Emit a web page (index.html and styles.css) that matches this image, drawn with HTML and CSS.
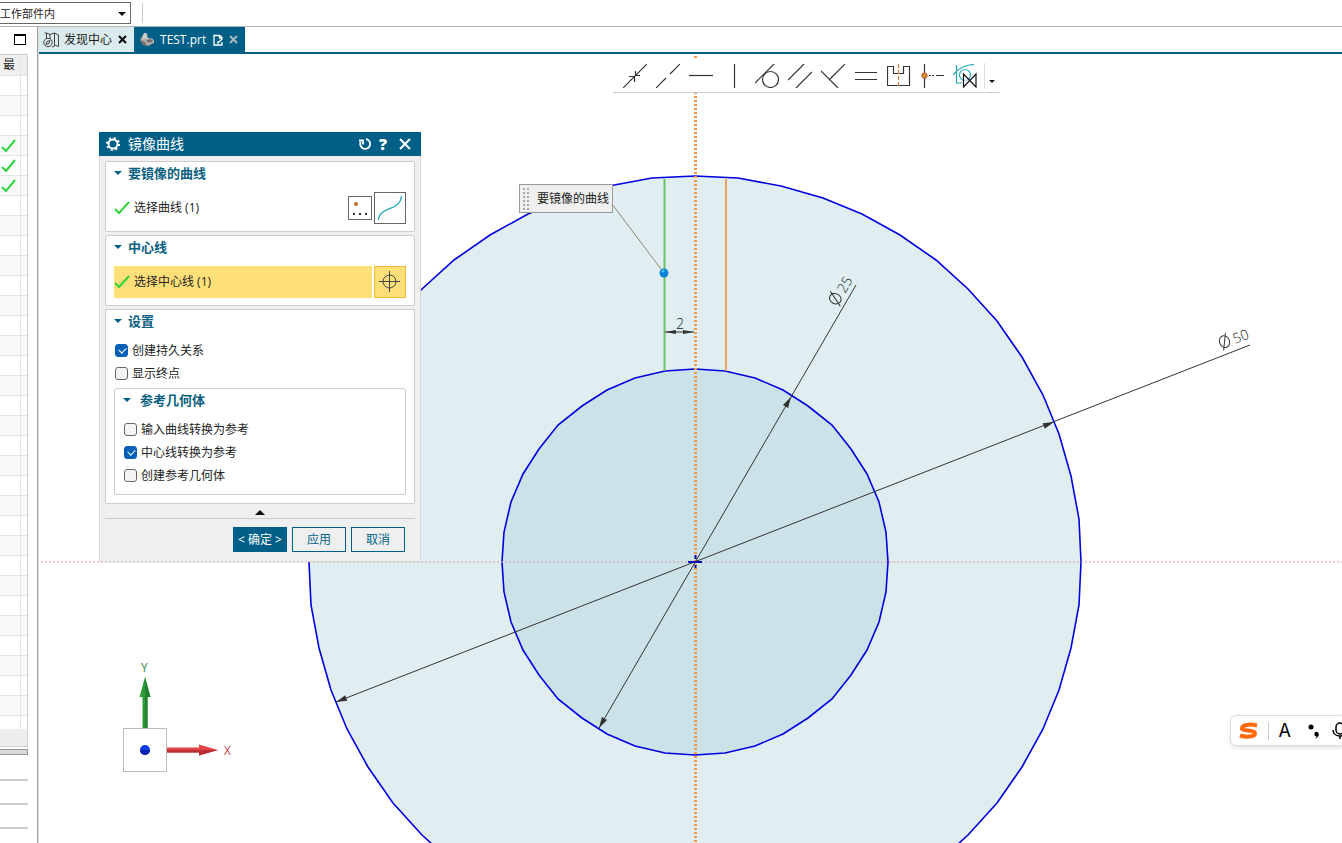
FILE: index.html
```
<!DOCTYPE html>
<html lang="zh-CN">
<head>
    <meta charset="UTF-8">
    <meta name="viewport" content="width=device-width, initial-scale=1.0">
    <title>TEST.prt</title>
    <link rel="stylesheet" href="styles.css">
</head>
<body>
    <header class="topbar">
        <div class="scope">
            <select aria-label="选择范围">
                <option>工作部件内</option>
            </select>
        </div>
        <span class="topbar-divider"></span>
    </header>

    <div class="workspace">
        <aside class="sidebar">
            <div class="sidebar-head">
                <button class="maximize" aria-label="最大化"></button>
            </div>
            <table class="history">
                <thead>
                    <tr><th>最</th><th></th></tr>
                </thead>
                <tbody>
                    <tr><td></td><td></td></tr>
                    <tr><td></td><td></td></tr>
                    <tr><td></td><td></td></tr>
                    <tr><td><svg class="tick" viewBox="0 0 16 14"><path d="M2 8l4 4L15 1"/></svg></td><td></td></tr>
                    <tr><td><svg class="tick" viewBox="0 0 16 14"><path d="M2 8l4 4L15 1"/></svg></td><td></td></tr>
                    <tr><td><svg class="tick" viewBox="0 0 16 14"><path d="M2 8l4 4L15 1"/></svg></td><td></td></tr>
                    <tr><td></td><td></td></tr>
                    <tr><td></td><td></td></tr>
                    <tr><td></td><td></td></tr>
                    <tr><td></td><td></td></tr>
                    <tr><td></td><td></td></tr>
                    <tr><td></td><td></td></tr>
                    <tr><td></td><td></td></tr>
                    <tr><td></td><td></td></tr>
                    <tr><td></td><td></td></tr>
                    <tr><td></td><td></td></tr>
                    <tr><td></td><td></td></tr>
                    <tr><td></td><td></td></tr>
                    <tr><td></td><td></td></tr>
                    <tr><td></td><td></td></tr>
                    <tr><td></td><td></td></tr>
                    <tr><td></td><td></td></tr>
                    <tr><td></td><td></td></tr>
                    <tr><td></td><td></td></tr>
                    <tr><td></td><td></td></tr>
                    <tr><td></td><td></td></tr>
                    <tr><td></td><td></td></tr>
                    <tr><td></td><td></td></tr>
                    <tr><td></td><td></td></tr>
                    <tr><td></td><td></td></tr>
                    <tr><td></td><td></td></tr>
                    <tr><td></td><td></td></tr>
                    <tr class="cut"><td></td><td></td></tr>
                </tbody>
            </table>
            <div class="scroll-track"></div>
            <div class="splitter"></div>
            <div class="drawer"></div>
            <div class="drawer"></div>
            <div class="drawer"></div>
        </aside>

        <main class="main">
            <nav class="tabs">
                <a class="tab" href="#">
                    <svg width="17" height="16" viewBox="0 0 17 16" fill="none" stroke="#444"><path d="M3.500 7V1L7 2.500V7M7 2.500L11.500 1v13L9 15M11.500 1L15.500 3v11.500L11.500 13M1.500 1h2"/><circle cx="5" cy="10.500" r="4.200"/><path d="M3 12.500l1-3 3-1-1 3z"/></svg>
                    <span>发现中心</span>
                    <svg width="9" height="9" viewBox="0 0 9 9" stroke="#111" stroke-width="2.200"><path d="M1 1l7 7M8 1L1 8"/></svg>
                </a>
                <a class="tab active" href="#">
                    <svg width="16" height="15" viewBox="0 0 16 15"><path d="M1 8L5 1l3 0 1 5 6 2v3l-6 3-5-1z" fill="#a8a4a0"/><path d="M1 8l5 2 2 4-4-1z" fill="#77706c"/><path d="M5 1L3 8l5-2-1-5z" fill="#d0cbc6"/><ellipse cx="10.500" cy="9" rx="4" ry="2.300" fill="#746f6c" stroke="#ddd" stroke-width=".8"/></svg>
                    <span>TEST.prt</span>
                    <svg width="11" height="12" viewBox="0 0 11 12" fill="none" stroke="#fff" stroke-width="1.300"><path d="M9 8v3H1V1.500h6L9.500 4"/><path d="M9.500 4.500L5 9V7M6.500 1.500V4h3"/></svg>
                    <svg width="9" height="9" viewBox="0 0 9 9" stroke="#a9b8c1" stroke-width="2"><path d="M1 1l7 7M8 1L1 8"/></svg>
                </a>
            </nav>

            <div class="canvas">
                <svg class="drawing">
                    <!-- sketch origin is the centre of both circles -->
                    <g transform="translate(656 508)">
                        <polygon class="curve outer" points="0,-386 43,-384 86,-376 128,-364 167,-348 205,-327 241,-302 273,-273 302,-241 327,-205 348,-167 364,-128 376,-86 384,-43 386,0 384,43 376,86 364,128 348,167 327,205 302,241 273,273 241,302 205,327 167,348 128,364 86,376 43,384 0,386 -43,384 -86,376 -128,364 -167,348 -205,327 -241,302 -273,273 -302,241 -327,205 -348,167 -364,128 -376,86 -384,43 -386,0 -384,-43 -376,-86 -364,-128 -348,-167 -327,-205 -302,-241 -273,-273 -241,-302 -205,-327 -167,-348 -128,-364 -86,-376 -43,-384"/>
                        <polygon class="curve inner" points="0,-193 30,-191 60,-184 88,-172 113,-156 137,-137 156,-113 172,-88 184,-60 191,-30 193,0 191,30 184,60 172,88 156,113 137,137 113,156 88,172 60,184 30,191 0,193 -30,191 -60,184 -88,172 -113,156 -137,137 -156,113 -172,88 -184,60 -191,30 -193,0 -191,-30 -184,-60 -172,-88 -156,-113 -137,-137 -113,-156 -88,-172 -60,-184 -30,-191"/>

                        <path class="axis-x" d="M-654 0H2000"/>
                        <path class="axis-y" d="M.5 -506V600"/>
                        <path class="source" d="M-30.500 -383V-191"/>
                        <path class="mirror" d="M31 -383V-191"/>

                        <g class="dim">
                            <path d="M161 -277L-96 166M555 -217L-359 140M-30 -230H-1"/>
                            <path class="arrow" d="M0 0l-11 -3v6z" transform="translate(96 -165) rotate(-60)"/>
                            <path class="arrow" d="M0 0l-11 -3v6z" transform="translate(-96 166) rotate(120)"/>
                            <path class="arrow" d="M0 0l-11 -3v6z" transform="translate(359 -140) rotate(-21)"/>
                            <path class="arrow" d="M0 0l-11 -3v6z" transform="translate(-359 140) rotate(159)"/>
                            <path class="arrow" d="M-30 -230l11 -2v4zM-1 -230l-11 -2v4z"/>
                            <text x="-19" y="-233">2</text>
                            <g transform="translate(143 -256) rotate(-60)">
                                <path d="M0 -6a5 6 0 0 1 10 0a5 6 0 0 1 -10 0M1 2L9 -14"/>
                                <text x="14">25</text>
                            </g>
                            <g transform="translate(527 -213) rotate(-21)">
                                <path d="M0 -6a5 6 0 0 1 10 0a5 6 0 0 1 -10 0M1 2L9 -14"/>
                                <text x="14">50</text>
                            </g>
                        </g>

                        <path class="leader" d="M-83 -358L-31 -289"/>
                        <circle cx="-31" cy="-289" r="4.500" fill="#0a84d8"/>
                        <circle cx="-32" cy="-291" r="1.500" fill="#4fc0ff"/>
                        <path class="origin" d="M-7 0H7M.5 -7v4M.5 -1v2M.5 3v3"/>
                    </g>

                    <!-- view triad -->
                    <g class="triad" transform="translate(106 696)">
                        <rect x="-21.500" y="-21.500" width="43" height="43" fill="#fff" stroke="#bbb"/>
                        <path d="M-2.500 -22v-31h-3L0 -73l5.500 20h-3v31z" fill="#2f9a38"/>
                        <path d="M0 -22v-51l5.500 20h-3v31z" fill="#23802c"/>
                        <path d="M22 -2.500h32v-3L73 0 54 5.500v-3H22z" fill="#e04444"/>
                        <path d="M22 0h51L54 5.500v-3H22z" fill="#b83034"/>
                        <circle r="5" fill="#0a3bea"/>
                        <path d="M-5 0a5 5 0 0 0 10 0z" fill="#0a22b0"/>
                        <text x="-4" y="-78" fill="#3c8c46">Y</text>
                        <text x="79" y="5" fill="#c8414a">X</text>
                    </g>
                </svg>

                <div class="constraints">
                    <button aria-label="重合"><svg viewBox="0 0 24 24"><path d="M0 24L24 0M6 12.500h5.500V18M12.500 7v4.500H17"/></svg></button>
                    <button aria-label="共线"><svg viewBox="0 0 24 24"><path d="M0 24l10-10M14 10L24 0"/></svg></button>
                    <button aria-label="水平"><svg viewBox="0 0 24 24"><path d="M0 11.500h24"/></svg></button>
                    <button aria-label="竖直"><svg viewBox="0 0 24 24"><path d="M12.500 0v24"/></svg></button>
                    <button aria-label="相切"><svg viewBox="0 0 24 24"><path d="M0 19L19 0"/><circle cx="15.500" cy="15.500" r="8"/></svg></button>
                    <button aria-label="平行"><svg viewBox="0 0 24 24"><path d="M0 16L16 0M8 24L24 8"/></svg></button>
                    <button aria-label="垂直"><svg viewBox="0 0 24 24"><path d="M9 15L24 0M0 7l17 17"/></svg></button>
                    <button aria-label="等长"><svg viewBox="0 0 24 24"><path d="M1 8.500h22M1 15.500h22"/></svg></button>
                    <button aria-label="对称"><svg viewBox="0 0 24 24"><path d="M.5 2.500h6v7h10v-7h6v19H.5z"/><path class="orange" d="M11.500 0v24"/></svg></button>
                    <button aria-label="中点"><svg viewBox="0 0 24 24"><path d="M4.500 0v24M9 11.500h2M12 11.500h2M16 11.500h8"/><circle cx="4.500" cy="11.500" r="2.500" fill="#d98a3d" stroke="#b5651d"/></svg></button>
                    <button aria-label="自动关系"><svg viewBox="0 0 24 24"><path d="M0 11Q8 1 21 .5M3.500 1v18H9" stroke="#22a6b8"/><circle cx="12" cy="11" r="5.500" stroke="#22a6b8"/><path d="M10.500 10v13L23 10v13z" stroke="#111" fill="#fff" fill-opacity=".6"/></svg></button>
                    <button class="more" aria-label="更多"></button>
                </div>

                <div class="callout"><span class="grip"></span>要镜像的曲线</div>

                <form class="dialog">
                    <div class="dialog-title">
                        <svg width="16" height="16" viewBox="0 0 16 16" fill="none" stroke="#fff"><circle cx="8" cy="8" r="4.500" stroke-width="2"/><circle cx="8" cy="8" r="6" stroke-width="2" stroke-dasharray="2 2.710"/></svg>
                        <h2>镜像曲线</h2>
                        <button type="button" aria-label="重置"><svg width="14" height="14" viewBox="0 0 14 14" fill="none" stroke="#fff" stroke-width="1.800"><path d="M8 2a5 5 0 1 1-5.500 3M1 3.500h4v4"/></svg></button>
                        <button type="button" class="help">?</button>
                        <button type="button" aria-label="关闭"><svg width="12" height="12" viewBox="0 0 12 12" stroke="#fff" stroke-width="2"><path d="M1 1l10 10M11 1L1 11"/></svg></button>
                    </div>
                    <div class="dialog-body">
                        <section class="group">
                            <h3>要镜像的曲线</h3>
                            <div class="pick">
                                <div class="pick-label"><svg class="tick" viewBox="0 0 16 14"><path d="M1 8l4 4L15 1"/></svg>选择曲线 (1)</div>
                                <button type="button" class="pick-small" aria-label="点"><svg width="22" height="22" viewBox="0 0 22 22"><circle cx="7" cy="7" r="2" fill="#d2691e"/><path d="M4 16h2v2H4zM10 16h2v2h-2zM16 16h2v2h-2z" fill="#333"/></svg></button>
                                <button type="button" class="pick-big" aria-label="曲线"><svg width="30" height="30" viewBox="0 0 30 30" fill="none" stroke="#22a6b8" stroke-width="1.300"><path d="M3.500 27C4 13 25 19 26.500 3"/></svg></button>
                            </div>
                        </section>
                        <section class="group">
                            <h3>中心线</h3>
                            <div class="pick selected">
                                <div class="pick-label"><svg class="tick" viewBox="0 0 16 14"><path d="M1 8l4 4L15 1"/></svg>选择中心线 (1)</div>
                                <button type="button" class="pick-big" aria-label="中心线"><svg width="30" height="30" viewBox="0 0 30 30" fill="none" stroke="#444"><circle cx="14.500" cy="14.500" r="6.500"/><path d="M4 14.500h21M14.500 4v21"/></svg></button>
                            </div>
                        </section>
                        <section class="group">
                            <h3>设置</h3>
                            <div class="checks">
                                <label><input type="checkbox" checked>创建持久关系</label>
                                <label><input type="checkbox">显示终点</label>
                            </div>
                            <div class="subgroup">
                                <h3>参考几何体</h3>
                                <div class="checks">
                                    <label><input type="checkbox">输入曲线转换为参考</label>
                                    <label><input type="checkbox" checked>中心线转换为参考</label>
                                    <label><input type="checkbox">创建参考几何体</label>
                                </div>
                            </div>
                        </section>
                        <button type="button" class="collapse" aria-label="收起"></button>
                        <div class="actions">
                            <button type="button" class="primary">&lt; 确定 &gt;</button>
                            <button type="button">应用</button>
                            <button type="button">取消</button>
                        </div>
                    </div>
                </form>

                <div class="ime">
                    <svg width="20" height="18" viewBox="0 0 20 18" fill="none" stroke="#ff6a0c" stroke-width="4"><path d="M18 3.500C10 1.500 3 3 3 6.500c0 3 13 1 13 5 0 3.500-9 4-15 2"/></svg>
                    <span class="ime-divider"></span>
                    <span class="ime-mode">A</span>
                    <svg width="12" height="16" viewBox="0 0 12 16"><circle cx="3" cy="4" r="2.500"/><circle cx="8.500" cy="11" r="2.200"/><path d="M10.700 11c0 3-1.700 4-4 4.500 1.500-1 2-2 2-3z"/></svg>
                    <svg width="16" height="18" viewBox="0 0 16 18" fill="none" stroke="#000" stroke-width="1.500"><rect x="4" y="1" width="8" height="11" rx="4"/><path d="M1 8c0 8 14 8 14 0M8 14v3"/></svg>
                </div>
            </div>
        </main>
    </div>
</body>
</html>
```
FILE: styles.css
```
* {
    box-sizing: border-box;
}
body {
    margin: 0;
    height: 100vh;
    display: flex;
    flex-direction: column;
    overflow: hidden;
    background: #fff;
    color: #222;
    font-family: "Open Sans", "Noto Sans CJK SC", sans-serif;
    font-size: 12px;
    line-height: 20px;
}
button {
    font: inherit;
    padding: 0;
    border: none;
    background: none;
    cursor: pointer;
}
h2, h3 {
    margin: 0;
}
svg {
    flex: none;
}

/* top bar */
.topbar {
    display: flex;
    align-items: center;
    flex: none;
    height: 27px;
    border-bottom: 1px solid #b4b4b4;
}
.scope {
    position: relative;
    width: 131px;
}
.scope select {
    display: block;
    appearance: none;
    width: 100%;
    height: 22px;
    padding: 0;
    border: 1px solid #666;
    border-left: none;
    border-radius: 0;
    background: #fff;
    color: #222;
    font-family: inherit;
    font-size: 11px;
}
.scope::after {
    content: "";
    position: absolute;
    right: 5px;
    top: 10px;
    border: 4px solid transparent;
    border-top-color: #111;
    pointer-events: none;
}
.topbar-divider {
    width: 1px;
    height: 20px;
    margin-left: 11px;
    background: #ccc;
}

/* left panel */
.workspace {
    display: flex;
    flex: 1;
    min-height: 0;
}
.sidebar {
    flex: none;
    width: 39px;
    border-right: 1px solid #dcdcdc;
    box-shadow: inset -1px 0 #a0a0a0;
    padding-right: 10px;
    overflow: hidden;
}
.sidebar-head {
    display: flex;
    justify-content: flex-end;
    height: 27px;
    padding: 7px 2px;
}
.maximize {
    width: 12px;
    height: 11px;
    border: 1px solid #000;
    border-top-width: 2px;
}
.history {
    width: 28px;
    table-layout: fixed;
    border-collapse: separate;
    border-spacing: 0;
    border-right: 1px solid #ccc;
}
.history th, .history td {
    height: 20px;
    padding: 0;
    line-height: 0;
    border-bottom: 1px solid #e4e4e4;
    border-right: 1px solid #e4e4e4;
}
.history th {
    height: 22px;
    width: 21px;
    padding-right: 2px;
    font-weight: normal;
    line-height: 20px;
    text-align: center;
    background: #efefef;
    border-top: 1px solid #ccc;
}
.history th + th, .history td + td {
    width: 6px;
    padding: 0;
    border-right: none;
}
.history tr:nth-child(even) td {
    background: #fafafa;
}
.history .cut td {
    height: 13px;
    border-bottom: none;
}
.tick {
    width: 16px;
    height: 14px;
    fill: none;
    stroke: #2fd43c;
    stroke-width: 2;
}
.scroll-track {
    width: 28px;
    height: 18px;
    background: #eee;
    border: 1px solid #d0d0d0;
    border-width: 0 1px 1px 0;
}
.splitter {
    width: 28px;
    height: 6px;
    margin: 2px 0 24px;
    background: #d8d8d8;
    border: 1px solid #999;
    border-left: none;
}
.drawer {
    width: 28px;
    height: 2px;
    margin-bottom: 22px;
    background: #ccc;
}

/* document tabs */
.main {
    display: flex;
    flex-direction: column;
    flex: 1;
    min-width: 0;
}
.tabs {
    display: flex;
    flex: none;
    height: 27px;
    border-bottom: 2px solid #005f87;
}
.tab {
    display: flex;
    align-items: center;
    gap: 4px;
    padding: 0 7px 0 4px;
    background: #dbecef;
    color: #222;
    text-decoration: none;
}
.tab span {
    margin-right: 2px;
}
.tab.active {
    gap: 5px;
    padding: 0 7px 0 5px;
    background: #005f87;
    color: #fff;
}

/* sketch */
.canvas {
    position: relative;
    flex: 1;
    min-height: 0;
    overflow: hidden;
}
.drawing {
    display: block;
    width: 100%;
    height: 100%;
}
.curve {
    stroke: #0000e0;
    stroke-width: 1.6;
}
.outer {
    fill: #e0eef2;
}
.inner {
    fill: #cbe2e8;
}
.axis-x {
    stroke: #d99aa6;
    stroke-dasharray: 2 2;
}
.axis-y {
    stroke: #f09a45;
    stroke-width: 3;
    stroke-dasharray: 2 2;
}
.source {
    stroke: #6dbf66;
    stroke-width: 2;
}
.mirror {
    stroke: #eba25c;
    stroke-width: 2;
}
.dim path {
    stroke: #333;
    fill: none;
}
.dim .arrow {
    fill: #333;
    stroke: none;
}
.dim text {
    font-family: "Open Sans", sans-serif;
    font-size: 14px;
    font-weight: 300;
    fill: #222;
}
.leader {
    stroke: #8f8770;
}
.origin {
    stroke: #0a0ab4;
    stroke-width: 2;
}
.triad text {
    font-size: 12px;
}

/* floating constraint toolbar */
.constraints {
    position: absolute;
    left: 574px;
    top: 4px;
    display: flex;
    align-items: center;
    width: 387px;
    height: 35px;
    padding: 2px 0 0 5px;
    background: #fff;
    border-bottom: 1px solid #ccc;
}
.constraints button {
    display: flex;
    align-items: center;
    justify-content: center;
    width: 33px;
    height: 26px;
}
.constraints svg {
    width: 24px;
    height: 24px;
    fill: none;
    stroke: #333;
    stroke-width: 1.2;
}
.constraints .orange {
    stroke: #d0803a;
    stroke-dasharray: 4 2;
}
.constraints .more {
    width: 14px;
    margin-left: 3px;
    padding-top: 14px;
    border-left: 1px solid #ddd;
}
.more::after {
    content: "";
    border: 3px solid transparent;
    border-top-color: #111;
}

.callout {
    position: absolute;
    left: 480px;
    top: 130px;
    display: flex;
    align-items: center;
    height: 29px;
    padding: 0 3px 0 2px;
    background: #efefef;
    border: 1px solid #999;
}
.grip {
    width: 8px;
    height: 24px;
    margin-right: 7px;
    background: radial-gradient(circle, #aaa 1px, transparent 1px) 0 0 / 4px 4px;
}

/* dialog */
.dialog {
    position: absolute;
    left: 60px;
    top: 78px;
    width: 322px;
    background: #efefef;
}
.dialog-title {
    display: flex;
    align-items: center;
    gap: 7px;
    height: 24px;
    padding: 0 10px 0 6px;
    background: #005f87;
    color: #fff;
}
.dialog-title h2 {
    flex: 1;
    font-size: 14px;
    font-weight: normal;
}
.dialog-title button {
    display: flex;
    color: #fff;
}
.dialog-title .help {
    margin-right: 5px;
    font-size: 16px;
    font-weight: 800;
}
.dialog-body {
    display: flex;
    flex-direction: column;
    gap: 3px;
    padding: 5px 5px 9px;
    border: 1px solid #d8d8d8;
    border-top: none;
}
.group, .subgroup {
    padding: 0 8px 7px;
    background: #fff;
    border: 1px solid #ccc;
    border-radius: 2px;
}
.group:nth-child(3) {
    padding-bottom: 8px;
}
.group h3 {
    display: flex;
    align-items: center;
    gap: 6px;
    height: 24px;
    padding-bottom: 2px;
    font-size: 13px;
    color: #0a6080;
}
.group h3::before {
    content: "";
    border: 4px solid transparent;
    border-top: 4px solid #005f87;
    border-bottom: none;
}
.group .subgroup h3 {
    gap: 9px;
}
.pick {
    display: flex;
    align-items: center;
    gap: 2px;
    margin-top: 6px;
}
.pick-label {
    display: flex;
    align-items: center;
    gap: 4px;
    flex: 1;
    height: 32px;
}
.pick-small, .pick-big {
    display: flex;
    border: 1px solid #666;
    background: #fff;
}
.selected .pick-label, .selected .pick-big {
    background: #ffe078;
}
.selected .pick-big {
    border-color: #f0bc30;
}
.checks {
    margin-top: 5px;
}
.checks label {
    display: flex;
    align-items: center;
    gap: 4px;
    height: 23px;
    padding-left: 1px;
}
.checks input {
    appearance: none;
    position: relative;
    width: 13px;
    height: 13px;
    margin: 0;
    border: 1px solid #666;
    border-radius: 3px;
    background: #f4f4f4;
}
.checks input:checked {
    background: #0560b8;
    border-color: #0560b8;
}
.checks input:checked::after {
    content: "";
    position: absolute;
    left: 3px;
    top: 2px;
    width: 6px;
    height: 4px;
    border: solid #fff;
    border-width: 0 0 1px 1px;
    transform: rotate(-45deg);
}
.subgroup {
    margin-top: 3px;
}
.collapse {
    display: flex;
    align-items: center;
    justify-content: center;
    height: 12px;
    border-bottom: 1px solid #ccc;
}
.collapse::after {
    content: "";
    border: 5px solid transparent;
    border-top: none;
    border-bottom-color: #111;
}
.actions {
    display: flex;
    justify-content: flex-end;
    gap: 5px;
    padding: 5px 10px 0 0;
}
.actions button {
    width: 54px;
    height: 25px;
    border: 1px solid #005f87;
    color: #005f87;
    white-space: nowrap;
}
.actions .primary {
    background: #005f87;
    color: #fff;
}

/* input method bar */
.ime {
    position: absolute;
    right: -4px;
    bottom: 97px;
    display: flex;
    align-items: center;
    gap: 9px;
    height: 31px;
    padding: 0 0 0 8px;
    background: #fff;
    border: 1px solid #ddd;
    border-radius: 6px;
    box-shadow: 0 2px 4px rgba(0, 0, 0, 0.12);
}
.ime-divider {
    width: 1px;
    height: 18px;
    background: #ccc;
}
.ime-mode {
    margin: 0 8px 0 1px;
    font-family: Inter, sans-serif;
    font-size: 18px;
    color: #000;
}
.ime svg:last-child {
    margin: 0 -3px 0 3px;
}
```
